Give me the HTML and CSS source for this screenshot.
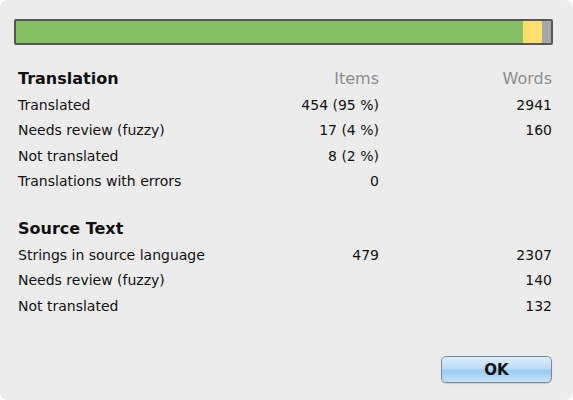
FILE: index.html
```html
<!DOCTYPE html>
<html>
<head>
<meta charset="utf-8">
<link rel="stylesheet" href="styles.css">
</head>
<body>
<div class="dialog">
  <div class="bar">
    <div class="seg seg-done" style="width:507px"></div>
    <div class="seg seg-fuzzy" style="width:19px"></div>
    <div class="seg seg-todo"></div>
  </div>

  <div class="table">
    <div class="head">Translation</div>
    <div class="colhead">Items</div>
    <div class="colhead">Words</div>

    <div class="label">Translated</div>
    <div class="num">454 (95 %)</div>
    <div class="num">2941</div>

    <div class="label">Needs review (fuzzy)</div>
    <div class="num">17 (4 %)</div>
    <div class="num">160</div>

    <div class="label">Not translated</div>
    <div class="num">8 (2 %)</div>
    <div class="num"></div>

    <div class="label">Translations with errors</div>
    <div class="num">0</div>
    <div class="num"></div>
  </div>

  <div class="table second">
    <div class="head">Source Text</div>
    <div></div>
    <div></div>

    <div class="label">Strings in source language</div>
    <div class="num">479</div>
    <div class="num">2307</div>

    <div class="label">Needs review (fuzzy)</div>
    <div class="num"></div>
    <div class="num">140</div>

    <div class="label">Not translated</div>
    <div class="num"></div>
    <div class="num">132</div>
  </div>

  <div class="footer">
    <button class="btn">OK</button>
  </div>
</div>
</body>
</html>
```

FILE: styles.css
```css
html, body {
  margin: 0;
  padding: 0;
  background: #ffffff;
}

body {
  font-family: "DejaVu Sans", "Liberation Sans", sans-serif;
  font-size: 14px;
  color: #111111;
}

.dialog {
  width: 573px;
  height: 400px;
  box-sizing: border-box;
  background: #ececec;
  border-radius: 8px;
  display: flex;
  flex-direction: column;
  padding-top: 19px;
}

.bar {
  margin-left: 14px;
  width: 539px;
  height: 26px;
  box-sizing: border-box;
  border: 2px solid #575757;
  border-radius: 2px;
  display: flex;
  background: #a7a7a7;
}

.seg {
  height: 100%;
}

.seg-done {
  background: #86c064;
}

.seg-fuzzy {
  background: #ffdf6c;
}

.seg-todo {
  flex: 1;
  background: #a7a7a7;
}

.table {
  display: grid;
  grid-template-columns: 1fr 140px 173px;
  grid-template-rows: 27px;
  grid-auto-rows: 25.5px;
  padding: 0 21px 0 18px;
  margin-top: 20px;
  align-items: center;
}

.table.second {
  margin-top: 21px;
}

.head {
  font-weight: bold;
  font-size: 16px;
}

.colhead {
  text-align: right;
  color: #8c8c8c;
  font-size: 16px;
}

.num {
  text-align: right;
}

.footer {
  margin-top: auto;
  display: flex;
  justify-content: flex-end;
  padding: 0 21px 17px 0;
}

.btn {
  width: 111px;
  height: 27px;
  font-family: "DejaVu Sans", "Liberation Sans", sans-serif;
  font-size: 15px;
  font-weight: bold;
  color: #111;
  border: 1px solid #7c8796;
  border-radius: 5px;
  background: linear-gradient(to bottom, #dcedfc 0%, #bcdcf7 45%, #9ccbf3 55%, #c4e3fd 100%);
  box-shadow: 0 1px 1px rgba(0,0,0,0.12);
  padding: 0;
}
```
